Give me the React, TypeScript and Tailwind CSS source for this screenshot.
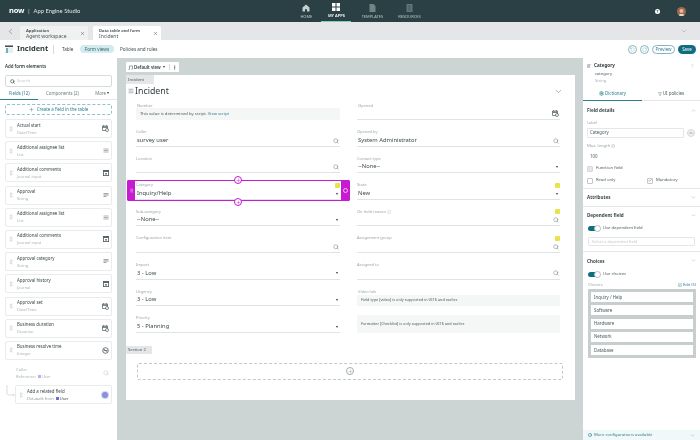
import { ChevronDown, ChevronLeft, ChevronRight, ChevronUp, Calendar, AlignLeft, GripVertical, Menu, MoreVertical, Plus, Search, X, Minus, SquarePen, RotateCcw, RotateCw, Check, Info, Filter, Settings, CircleCheck } from 'lucide-react';

const Grip = () => <GripVertical size={6} className="text-[#c6cccd] shrink-0" />;

const DateIcon = () => (
  <svg width="7" height="7" viewBox="0 0 7 7" className="shrink-0">
    <path d="M.5 1h5v1.200H.5zM.5 2.200h5V5.500H.5z" fill="none" stroke="#4a5a5d" strokeWidth=".7" />
    <rect x="1.200" y=".2" width=".7" height="1.200" fill="#4a5a5d" />
    <rect x="4" y=".2" width=".7" height="1.200" fill="#4a5a5d" />
    <circle cx="5" cy="5" r="1.500" fill="#fff" stroke="#4a5a5d" strokeWidth=".7" />
  </svg>
);

const ListIcon = () => (
  <svg width="6" height="5" viewBox="0 0 6 5" className="shrink-0">
    <path d="M.5 1h5M.5 2.500h5M.5 4h5" stroke="#8a9698" strokeWidth=".7" />
  </svg>
);

const JournalIcon = () => (
  <svg width="6" height="6" viewBox="0 0 6 6" className="shrink-0">
    <rect x=".4" y=".4" width="5.200" height="5.200" fill="#fff" stroke="#4a5a5d" strokeWidth=".8" />
    <rect x=".4" y=".4" width="5.200" height="1.500" fill="#4a5a5d" />
    <rect x="2" y="3" width="2" height="1.600" fill="#7d898b" />
  </svg>
);

const TextIcon = () => (
  <svg width="6" height="5" viewBox="0 0 6 5" className="shrink-0">
    <path d="M.5 .6h5M.5 2h5M.5 3.400h3" stroke="#7d898b" strokeWidth=".8" />
  </svg>
);

const TimeIcon = () => (
  <svg width="7" height="7" viewBox="0 0 7 7" className="shrink-0">
    <circle cx="3.500" cy="3.500" r="2.800" fill="none" stroke="#4a5a5d" strokeWidth=".8" />
    <path d="M1.500 1.800 5.500 5.200M1.500 3.500h4" stroke="#4a5a5d" strokeWidth=".7" />
  </svg>
);

const fieldIcons: Record<string, React.ReactNode> = {
  date: <DateIcon />,
  list: <ListIcon />,
  journal: <JournalIcon />,
  text: <TextIcon />,
  time: <TimeIcon />,
};

const elements = [
  { name: 'Actual start', type: 'Date/Time', icon: 'date' },
  { name: 'Additional assignee list', type: 'List', icon: 'list' },
  { name: 'Additional comments', type: 'Journal input', icon: 'journal' },
  { name: 'Approval', type: 'String', icon: 'text' },
  { name: 'Additional assignee list', type: 'List', icon: 'list' },
  { name: 'Additional comments', type: 'Journal input', icon: 'journal' },
  { name: 'Approval category', type: 'String', icon: 'text' },
  { name: 'Approval history', type: 'Journal', icon: 'journal' },
  { name: 'Approval set', type: 'Date/Time', icon: 'date' },
  { name: 'Business duration', type: 'Duration', icon: 'date' },
  { name: 'Business resolve time', type: 'Integer', icon: 'time' },
];

const NavItem = ({ label, active, icon }: { label: string; active?: boolean; icon: React.ReactNode }) => (
  <div className={`flex flex-col items-center justify-center h-[22px] w-[30px] ${active ? 'border-b border-[#7fd0c4]' : ''}`}>
    <div className="h-[10px] flex items-center">{icon}</div>
    <span className={`text-[4px] mt-[1px] leading-[6px] whitespace-nowrap ${active ? 'text-white font-semibold' : 'text-[#b9c6c7]'}`}>{label}</span>
  </div>
);

const Badge = () => <span className="w-[5px] h-[5px] rounded-[1px] bg-[#e9e34a] block" />;

const Caret = () => (
  <span className="w-0 h-0 border-l-[1.8px] border-r-[1.8px] border-t-[2.2px] border-l-transparent border-r-transparent border-t-[#2f3c3e] mr-[1px]" />
);

const Field = ({ label, value, icon, badge, children }: { label: string; value?: string; icon?: 'search' | 'caret'; badge?: boolean; children?: React.ReactNode }) => (
  <div className="relative h-[26.6px] pt-[9px] border-b border-[#dfe3e3]">
    <div className="h-[6px] flex items-center justify-between">
      <span className="text-[4px] text-[#9aa4a6] leading-none">{label}</span>
      {badge && <Badge />}
    </div>
    <div className="h-[11px] flex items-center justify-between pl-[1px] pr-[1px]">
      <span className="text-[5.8px] text-[#3c494b] leading-none">{value}</span>
      {icon === 'search' && <Search size={6} className="text-[#6f7c7e]" />}
      {icon === 'caret' && <Caret />}
    </div>
    {children}
  </div>
);

const Choice = ({ label }: { label: string }) => (
  <div className="h-[10px] bg-white flex items-center px-[3px] text-[4.4px] text-[#4a5a5d]">{label}</div>
);

const Toggle = () => (
  <span className="relative block w-[12px] h-[5px] rounded-full bg-[#0f6d80]">
    <span className="absolute -right-[1px] -top-[1px] w-[7px] h-[7px] rounded-full bg-white border border-[#b5bdbe]" />
  </span>
);

const SectionHead = ({ title, up }: { title: string; up?: boolean }) => (
  <div className="flex items-center justify-between px-[4px]">
    <span className="text-[4.6px] font-bold text-[#3c494b]">{title}</span>
    {up ? <ChevronUp size={5} className="text-[#8f9a9c]" /> : <ChevronDown size={5} className="text-[#8f9a9c]" />}
  </div>
);

export default function App() {
  return (
    <div className="w-[700px] h-[440px] overflow-hidden flex flex-col bg-white blur-[0.3px] font-['Noto_Sans',sans-serif]">
      {/* top nav */}
      <header className="relative h-[22px] shrink-0 bg-[#2a4044] flex items-center">
        <div className="flex items-center pl-[9px] text-white">
          <span className="text-[7.5px] font-bold leading-none tracking-[-0.2px]">now</span>
          <span className="text-[6px] text-[#c9d3d4] mx-[3px] leading-none">|</span>
          <span className="text-[5.8px] text-[#dfe6e6] leading-none whitespace-nowrap font-['Lato',sans-serif]">App Engine Studio</span>
        </div>
        <nav className="ml-[211px] flex items-center">
          <NavItem label="HOME" icon={
            <svg width="8" height="8" viewBox="0 0 8 8"><path d="M4 .5 7.500 3.400V7.500H5V5.200H3v2.300H.5V3.400z" fill="#c3cfd0" /></svg>
          } />
          <NavItem label="MY APPS" active icon={
            <svg width="8" height="8" viewBox="0 0 8 8" fill="#fff"><rect width="3.500" height="3.500" /><rect x="4.500" width="3.500" height="3.500" /><rect y="4.500" width="3.500" height="3.500" /><rect x="4.500" y="4.500" width="3.500" height="3.500" /></svg>
          } />
          <span className="w-[6px]" />
          <NavItem label="TEMPLATES" icon={
            <svg width="7" height="8" viewBox="0 0 7 8"><path d="M.5 0H4.500L6.500 2V8H.5z" fill="#6f8588" /></svg>
          } />
          <span className="w-[7px]" />
          <NavItem label="RESOURCES" icon={
            <svg width="7" height="8" viewBox="0 0 7 8"><rect x=".5" width="6" height="8" rx=".5" fill="#5e7679" /><path d="M2 2h3M2 4h3M2 6h3" stroke="#2a4044" strokeWidth=".5" /></svg>
          } />
        </nav>
        <div className="ml-auto flex items-center pr-[14px] gap-[17px]">
          <span className="w-[5px] h-[5px] rounded-full bg-white text-[4px] leading-[5px] text-center font-bold text-[#2a4044]">?</span>
          <svg width="9" height="9" viewBox="0 0 9 9">
            <circle cx="4.500" cy="4.500" r="4.500" fill="#9c6a4c" />
            <circle cx="4.500" cy="3.900" r="2" fill="#e7b899" />
            <path d="M1.500 8C2.400 6.500 6.600 6.500 7.500 8 6 9.400 3 9.400 1.500 8z" fill="#e9d9cc" />
          </svg>
        </div>
      </header>

      {/* tab strip */}
      <div className="h-[18px] shrink-0 bg-[#e4e6e7] flex items-end">
        <div className="w-[20px] h-full flex items-center justify-center">
          <ChevronLeft size={9} strokeWidth={1.2} className="text-[#4a5a5d]" />
        </div>
        <div className="w-[68px] h-[14px] bg-[#f0f1f1] rounded-t-[2px] flex items-center justify-between pl-[6px] pr-[3px]">
          <div className="leading-none">
            <div className="text-[4.200px] font-semibold text-[#3c494b] leading-[5px]">Application</div>
            <div className="text-[5px] text-[#4a5a5d] leading-[6px]">Agent workspace</div>
          </div>
          <X size={5} className="text-[#3c494b]" />
        </div>
        <div className="w-[68px] h-[14px] ml-[5px] bg-white rounded-t-[2px] flex items-center justify-between pl-[6px] pr-[3px]">
          <div className="leading-none">
            <div className="text-[4.200px] font-semibold text-[#3c494b] leading-[5px]">Data table and form</div>
            <div className="text-[5px] text-[#4a5a5d] leading-[6px]">Incident</div>
          </div>
          <X size={5} className="text-[#3c494b]" />
        </div>
        <div className="ml-auto h-full flex items-center pr-[12px]">
          <ChevronDown size={8} strokeWidth={1} className="text-[#6f7c7e]" />
        </div>
      </div>

      {/* title bar */}
      <div className="h-[18px] shrink-0 bg-white flex items-center pl-[5px] pr-[4px]">
        <svg width="9" height="9" viewBox="0 0 9 9" className="shrink-0"><rect y=".5" width="8" height="1.400" fill="#2f3c3e" /><path d="M.5 2.500v5.500h7.500V2.500" fill="#e9eeee" /><rect x="1" y="3" width="2" height="5" fill="#6eb0bd" /></svg>
        <span className="ml-[3px] w-[36px] text-[7.5px] font-bold text-[#2f3c3e] leading-none">Incident</span>
        <span className="w-px h-[9px] bg-[#d5dada]" />
        <span className="ml-[8px] w-[13px] text-[4.600px] text-[#3c494b]">Table</span>
        <span className="ml-[5px] w-[34px] text-center h-[8px] rounded-full bg-[#d3ebee] text-[4.600px] leading-[8px] text-[#2f6473]">Form views</span>
        <span className="ml-[6px] text-[4.600px] text-[#3c494b]">Policies and rules</span>
        <div className="ml-auto flex items-center gap-[3px]">
          <span className="w-[9px] h-[9px] rounded-full border border-[#7fb6c1] flex items-center justify-center"><RotateCcw size={5} className="text-[#7fb6c1]" /></span>
          <span className="w-[9px] h-[9px] rounded-full border border-[#7fb6c1] flex items-center justify-center"><RotateCw size={5} className="text-[#7fb6c1]" /></span>
          <span className="w-[23px] h-[9px] rounded-full border border-[#7fb6c1] text-[4.400px] leading-[7px] text-center text-[#3b7f8f]">Preview</span>
          <span className="w-[18px] h-[9px] rounded-full bg-[#0f6d80] text-[4.400px] leading-[9px] text-center text-white">Save</span>
        </div>
      </div>

      <div className="flex-1 flex min-h-0">
        {/* left panel */}
        <aside className="w-[117px] shrink-0 bg-white flex flex-col">
          <div className="h-[17px] shrink-0 flex items-center px-[5px] text-[4.400px] font-semibold text-[#2f3c3e]">Add form elements</div>
          <div className="mx-[5px] h-[12px] shrink-0 border border-[#d5dada] rounded-[2px] flex items-center px-[4px] gap-[2px]">
            <Search size={5} strokeWidth={3} className="text-[#3c494b]" />
            <span className="text-[4.200px] text-[#c2c9ca]">Search</span>
          </div>
          <div className="h-[13px] shrink-0 flex items-center justify-between relative pl-[9px] pr-[7px] text-[4.400px] text-[#6f7c7e] border-b border-[#e4e6e7]">
            <span className="text-[#2f7f90]">Fields (12)</span>
            <span>Components (2)</span>
            <span className="flex items-center gap-[1px]">More <Caret /></span>
            <span className="absolute left-0 -bottom-px w-[38px] h-px bg-[#2f7f90]" />
          </div>
          <div className="mx-[5px] mt-[4px] h-[11px] shrink-0 border border-dashed border-[#8fc3cd] rounded-[2px] flex items-center justify-center gap-[3px] text-[4.400px] text-[#2f7f90]">
            <Plus size={5} /><span>Create a field in the table</span>
          </div>
          <div className="mt-[4px] mx-[5px] flex flex-col gap-[3.200px]">
            {elements.map((el, i) => (
              <div key={i} className="h-[19px] shrink-0 border border-[#e9ebec] rounded-[2px] flex items-center pl-[2px] pr-[2px]">
                <Grip />
                <div className="ml-[3px] flex-1">
                  <div className="text-[4.400px] text-[#3c494b] leading-[7px]">{el.name}</div>
                  <div className="text-[4px] text-[#a9b2b3] leading-[7px]">{el.type}</div>
                </div>
                {fieldIcons[el.icon]}
              </div>
            ))}
            <div className="h-[19px] shrink-0 flex items-center pl-[11px] pr-[3px]">
              <div className="flex-1">
                <div className="text-[4.200px] text-[#a9b2b3] leading-[7px]">Caller</div>
                <div className="text-[4px] text-[#a9b2b3] leading-[7px] flex items-center gap-[1px]">Reference: <span className="w-[3px] h-[3px] bg-[#b3b5e8] ml-[1px]" /> User</div>
              </div>
              <Search size={6} className="text-[#c2c9ca]" />
            </div>
            <div className="flex items-center">
              <svg width="10" height="19" viewBox="0 0 10 19" className="shrink-0"><path d="M2 0v8q0 2 2 2h5M8 8.500 9.500 10 8 11.500" fill="none" stroke="#c2c9ca" strokeWidth=".6" /></svg>
              <div className="h-[19px] flex-1 border border-[#e9ebec] rounded-[2px] flex items-center pl-[2px] pr-[3px]">
                <Grip />
                <div className="ml-[3px] flex-1">
                  <div className="text-[4.400px] text-[#3c494b] leading-[7px]">Add a related field</div>
                  <div className="text-[4px] text-[#8f9a9c] leading-[7px] flex items-center gap-[1px]">Dot-walk from <span className="w-[3px] h-[3px] bg-[#6a6fd0] ml-[1px]" /><span className="text-[#3c494b]">User</span></div>
                </div>
                <span className="w-[6px] h-[6px] rounded-full bg-[#8b8fdc] ring-1 ring-[#d4d5f3]" />
              </div>
            </div>
          </div>
        </aside>

        {/* canvas */}
        <main className="flex-1 bg-[#cdd5d4] pl-[9px] pr-[8px] pt-[4px] min-w-0">
          <div className="w-[53px] h-[10px] bg-white rounded-[1px] flex items-center pl-[2px] gap-[1px]">
            <svg width="5" height="5" viewBox="0 0 5 5" className="shrink-0"><path d="M1.500 1h3v3M1.500 1v3.500M.5 4.500h1M3.500 4.200h1" fill="none" stroke="#3c494b" strokeWidth=".5" /></svg>
            <span className="text-[4.400px] font-semibold text-[#2f3c3e] whitespace-nowrap mr-[1px]">Default view</span>
            <Caret />
            <span className="w-px h-[6px] bg-[#d5dada] ml-[2px]" />
            <MoreVertical size={5} className="text-[#2f3c3e] ml-[1px]" />
          </div>
          <div className="mt-[3px] h-[325px] bg-white">
            <div className="w-[28px] h-[9px] bg-[#e4e6e7] text-[4.200px] leading-[9px] pl-[2px] text-[#4a5a5d]">Incident</div>
            <div className="h-[14px] flex items-center pl-[2px] pr-[12px]">
              <Menu size={6} className="text-[#5c696b]" />
              <span className="ml-[1px] text-[8.8px] text-[#2f3c3e] leading-none">Incident</span>
              <ChevronDown size={9} strokeWidth={1.2} className="ml-auto text-[#4a5a5d]" />
            </div>
            <div className="grid grid-cols-[204px_203px] gap-x-[17px] pl-[10px]">
              <div>
                <div className="h-[22px] pt-[4px]">
                  <div className="h-[6px] text-[4px] leading-[7px] text-[#9aa4a6] pl-[1px]">Number</div>
                  <div className="h-[12px] bg-[#f5f6f6] flex items-center px-[4px] text-[4.200px] text-[#4a5a5d]">This value is determined by script.&nbsp;<span className="text-[#2f7f90]">View script</span></div>
                </div>
                <Field label="Caller" value="survey user" icon="search" />
                <Field label="Location" icon="search" />
                <Field label="Category" value="Inquiry/Help" icon="caret" badge>
                  <div className="absolute -left-[9px] -right-[10px] top-[7px] -bottom-[2px] border border-[#c61bd1] rounded-[1px] flex justify-between pointer-events-none">
                    <span className="w-[7px] bg-[#c61bd1] flex items-center justify-center"><GripVertical size={5} className="text-[#f0b5f4]" /></span>
                    <span className="w-[8px] bg-[#c61bd1] flex items-center justify-center"><span className="w-[5px] h-[5px] rounded-full border-[0.5px] border-[#f0b5f4]" /></span>
                  </div>
                  <span className="absolute left-[98px] top-[3px] w-[8px] h-[8px] rounded-full bg-white border border-[#c61bd1] flex items-center justify-center"><Plus size={5} className="text-[#c61bd1]" /></span>
                  <span className="absolute left-[98px] top-[25px] w-[8px] h-[8px] rounded-full bg-white border border-[#c61bd1] flex items-center justify-center z-10"><Plus size={5} className="text-[#c61bd1]" /></span>
                </Field>
                <Field label="Sub-category" value="--None--" icon="caret" />
                <Field label="Configuration item" icon="search" />
                <Field label="Impact" value="3 - Low" icon="caret" />
                <Field label="Urgency" value="3 - Low" icon="caret" />
                <Field label="Priority" value="5 - Planning" icon="caret" />
              </div>
              <div>
                <div className="h-[22px] pt-[4px] border-b border-[#dfe3e3]">
                  <div className="h-[6px] text-[4px] leading-[7px] text-[#9aa4a6] pl-[1px]">Opened</div>
                  <div className="h-[11px] flex items-center justify-end pr-[1px]"><DateIcon /></div>
                </div>
                <Field label="Opened by" value="System Administrator" icon="search" />
                <Field label="Contact type" value="--None--" icon="caret" />
                <Field label="State" value="New" icon="caret" badge />
                <Field label="On hold reason  ⓘ" icon="search" badge />
                <Field label="Assignment group" icon="search" badge />
                <Field label="Assigned to" icon="search" />
                <div className="pt-[9px]">
                  <div className="h-[6px] text-[4px] leading-[6px] text-[#9aa4a6] pl-[1px]">Video link</div>
                  <div className="h-[11px] bg-[#f5f6f6] flex items-center px-[4px] text-[3.800px] text-[#4a5a5d]">Field type [video] is only supported in UI16 and earlier.</div>
                  <div className="mt-[9px] h-[18px] bg-[#f5f6f6] flex items-center px-[4px] text-[3.800px] text-[#4a5a5d]">Formatter [Checklist] is only supported in UI16 and earlier.</div>
                </div>
              </div>
            </div>
            <div className="mt-[13px] w-[26px] h-[8px] bg-[#e4e6e7] rounded-[1px] text-[4.200px] leading-[8px] pl-[2px] text-[#4a5a5d]">Section 2</div>
            <div className="mt-[9px] ml-[11px] w-[426px] h-[17px] border border-dashed border-[#c2c9ca] rounded-[2px] flex items-center justify-center">
              <span className="w-[8px] h-[8px] rounded-full border border-[#a2acad] flex items-center justify-center"><Plus size={5} className="text-[#8f9a9c]" /></span>
            </div>
          </div>
        </main>

        {/* right panel */}
        <aside className="w-[117px] shrink-0 bg-white flex flex-col text-[#4a5a5d]">
          <div className="h-[27px] pt-[4px] pl-[4px] pr-[5px] shrink-0">
            <div className="flex items-center h-[7.700px]">
              <AlignLeft size={4} strokeWidth={3} className="text-[#4a5a5d]" />
              <span className="ml-[3px] text-[4.600px] font-bold text-[#2f3c3e]">Category</span>
              <ChevronRight size={5} className="ml-auto text-[#8f9a9c]" />
            </div>
            <div className="pl-[8px] h-[7.700px] text-[4.200px] leading-[7.700px]">category</div>
            <div className="pl-[8px] h-[7.700px] text-[4px] leading-[7.700px] text-[#a9b2b3]">String</div>
          </div>
          <div className="relative h-[16px] shrink-0 flex pt-[2px] text-[4.400px] border-b border-[#e4e6e7]">
            <div className="w-[59px] flex items-center justify-center gap-[1px] text-[#2f7f90]"><Settings size={5} strokeWidth={3} /><span>Dictionary</span></div>
            <div className="flex-1 flex items-center justify-center gap-[1px]"><Filter size={4} /><span>UI policies</span></div>
            <span className="absolute left-0 -bottom-px w-[59px] h-px bg-[#2f7f90]" />
          </div>
          <div className="h-[88px] shrink-0 border-b border-[#e4e6e7]">
            <div className="h-[19px] flex items-center"><div className="flex-1"><SectionHead title="Field details" up /></div></div>
            <div className="pl-[4px] h-[6px] text-[4px] leading-[6px] text-[#9aa4a6]">Label</div>
            <div className="mt-[1.500px] flex items-center pl-[4px] pr-[5px]">
              <div className="w-[97px] h-[10px] border border-[#e4e6e7] rounded-[1px] flex items-center px-[2px] text-[4.400px]">Category</div>
              <span className="ml-auto w-[8px] h-[8px] rounded-full bg-[#eef0f0] border border-[#d5dada] flex items-center justify-center"><Minus size={4} strokeWidth={3} /></span>
            </div>
            <div className="mt-[5px] pl-[4px] h-[6px] text-[4.200px] leading-[6px] text-[#9aa4a6] flex items-center gap-[1px]">Max. length <Info size={4} /></div>
            <div className="mt-[2px] pl-[7px] h-[10px] text-[4.400px] leading-[10px]">100</div>
            <div className="mt-[2px] pl-[4px] h-[12px] flex items-center gap-[3px] text-[4.200px]">
              <span className="w-[6px] h-[6px] bg-[#e4e6e7] border border-[#d5dada] rounded-[1px]" />Function field
            </div>
            <div className="pl-[4px] h-[12px] flex items-center text-[4.200px]">
              <span className="w-[6px] h-[6px] border border-[#c2c9ca] rounded-[1px] mr-[3px]" /><span className="w-[51px]">Read only</span>
              <span className="w-[6px] h-[6px] border border-[#c2c9ca] rounded-[1px] mr-[3px] flex items-center justify-center"><Check size={5} strokeWidth={3} className="text-[#4a5a5d]" /></span>Mandatory
            </div>
          </div>
          <div className="h-[18px] shrink-0 border-b border-[#e4e6e7] flex items-center"><div className="flex-1"><SectionHead title="Attributes" /></div></div>
          <div className="h-[45px] shrink-0 border-b border-[#e4e6e7]">
            <div className="h-[17px] flex items-center"><div className="flex-1"><SectionHead title="Dependent field" /></div></div>
            <div className="h-[8px] pl-[5px] flex items-center gap-[3px] text-[4.200px]"><Toggle /><span>Use dependent field</span></div>
            <div className="mt-[5px] ml-[5px] w-[107px] h-[9px] border border-[#e4e6e7] rounded-[1px] flex items-center px-[3px] text-[4px] text-[#c2c9ca]">Select a dependent field</div>
          </div>
          <div className="h-[18px] shrink-0 flex items-center"><div className="flex-1"><SectionHead title="Choices" /></div></div>
          <div className="h-[8px] shrink-0 pl-[5px] flex items-center gap-[3px] text-[4.200px]"><Toggle /><span>Use choices</span></div>
          <div className="mt-[3px] h-[8px] shrink-0 pl-[5px] pr-[4px] flex items-center justify-between text-[4px] text-[#9aa4a6]">
            <span>Choices</span>
            <span className="flex items-center gap-[1px] text-[#2f7f90]"><SquarePen size={4} />Edit (5)</span>
          </div>
          <div className="ml-[5px] mr-[4px] h-[69px] shrink-0 bg-[#c8cdcd] p-[3px] flex flex-col gap-[3.300px]">
            <Choice label="Inquiry / Help" />
            <Choice label="Software" />
            <Choice label="Hardware" />
            <Choice label="Network" />
            <Choice label="Database" />
          </div>
          <div className="mt-auto h-[10px] shrink-0 bg-[#f1f8f9] flex items-center px-[5px] gap-[2px] text-[4.200px] text-[#2f7f90]">
            <CircleCheck size={4} strokeWidth={3} /><span>More configurations available</span>
            <ChevronDown size={5} className="ml-auto text-[#8f9a9c]" />
          </div>
        </aside>
      </div>
    </div>
  );
}
